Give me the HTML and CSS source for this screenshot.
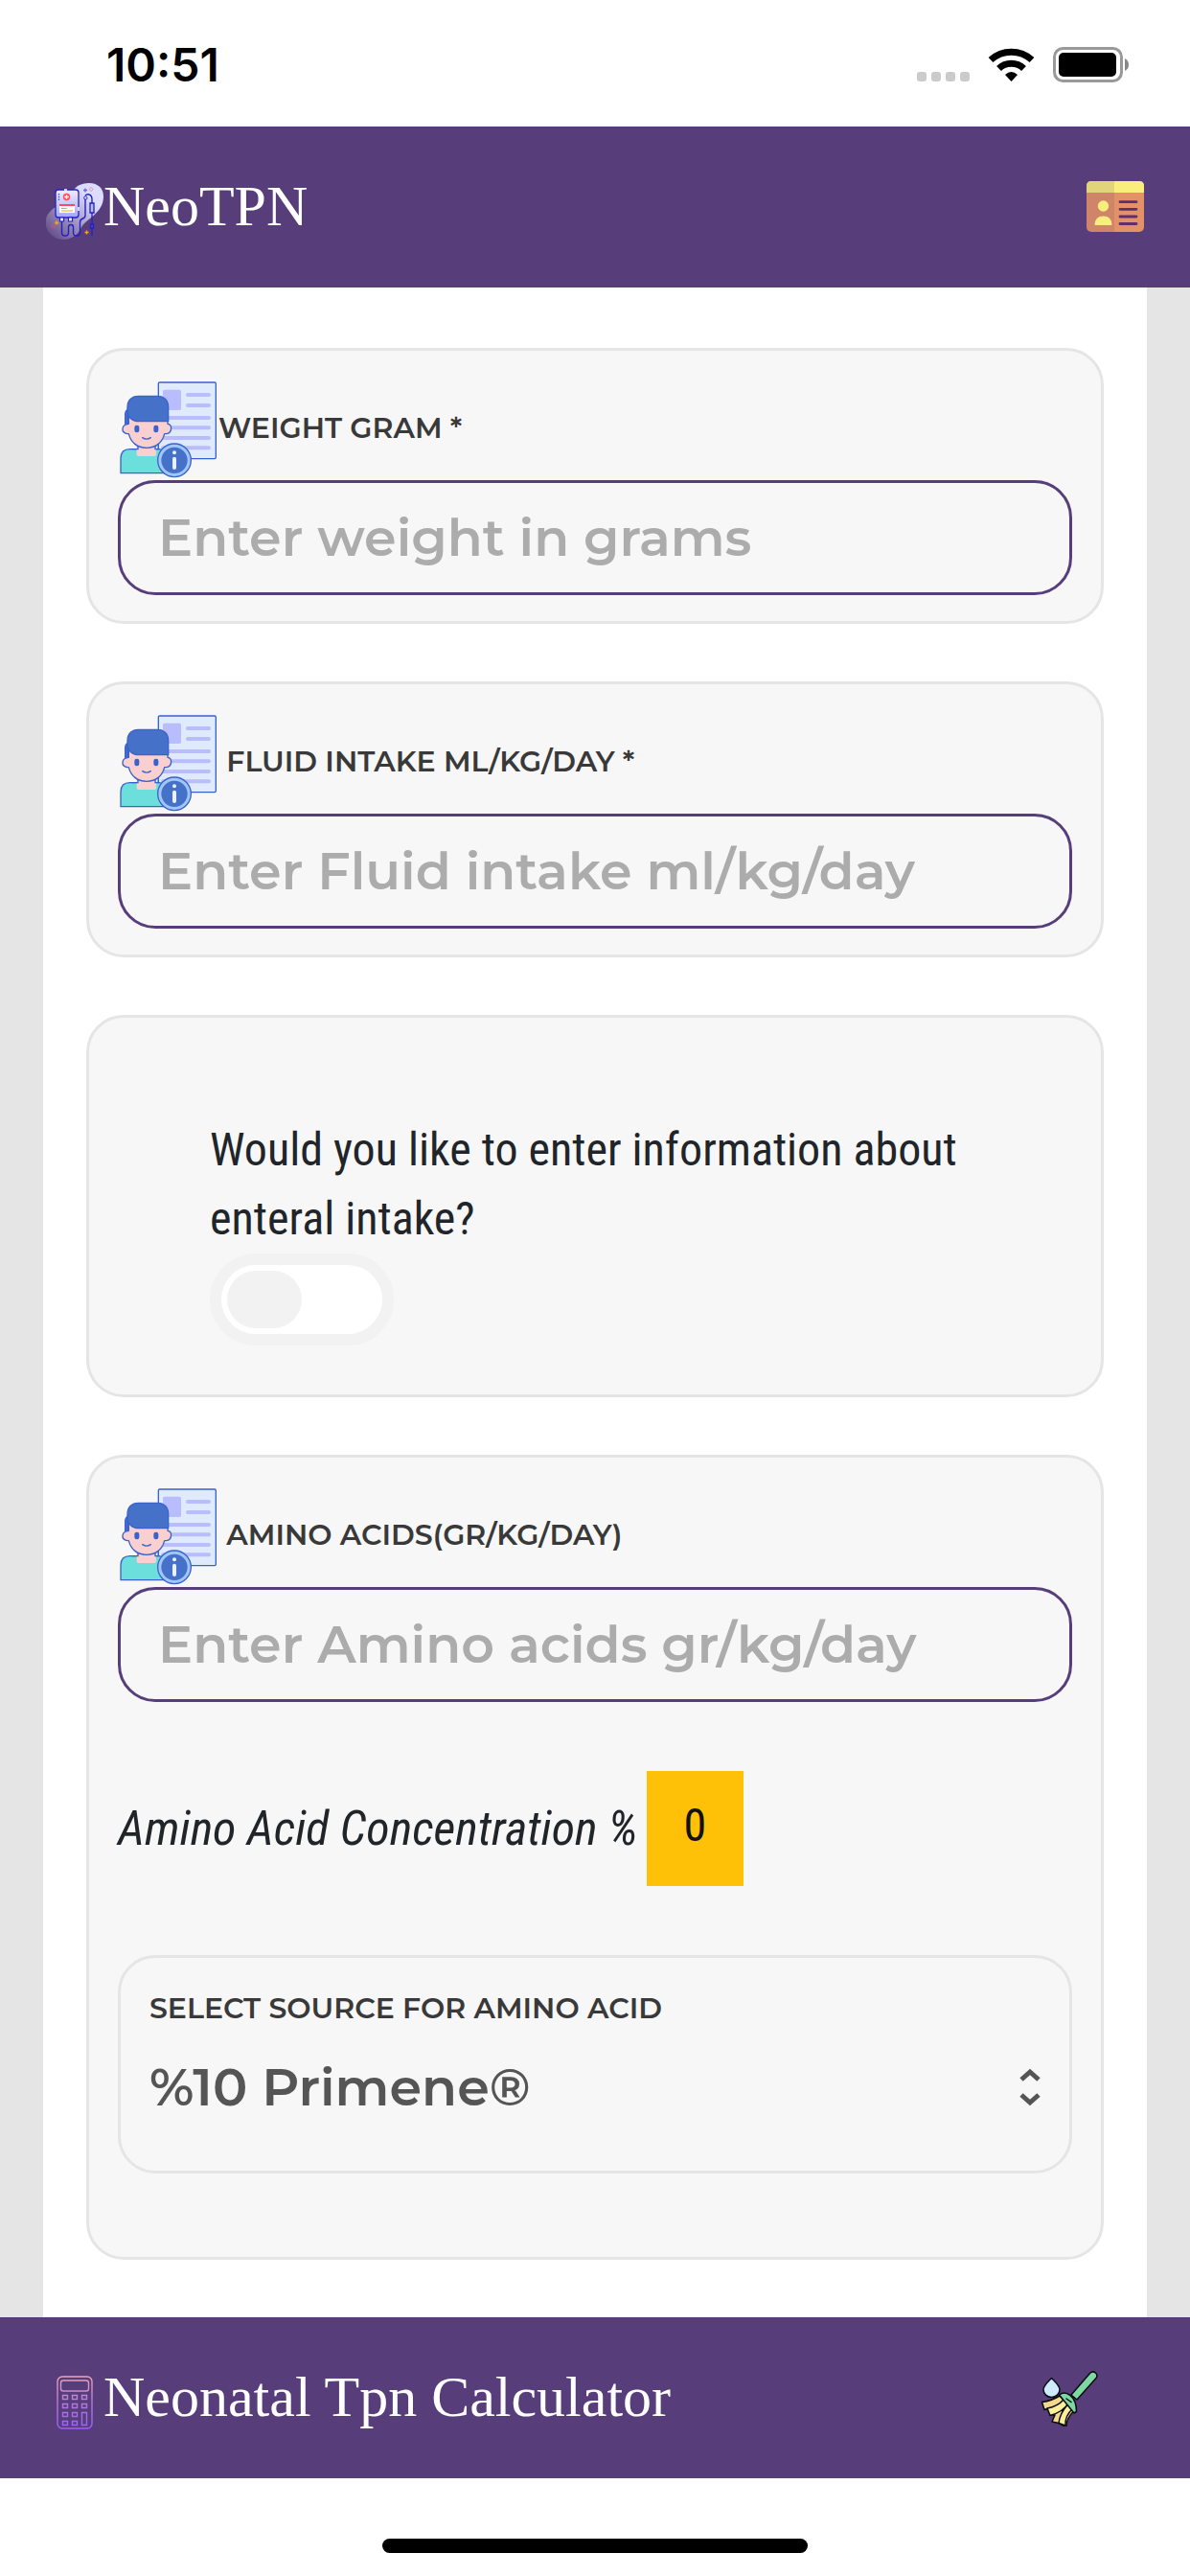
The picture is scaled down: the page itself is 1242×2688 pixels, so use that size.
FILE: index.html
```html
<!DOCTYPE html>
<html lang="en">
<head>
  <meta charset="UTF-8">
  <meta name="viewport" content="width=device-width, initial-scale=1">
  <title>NeoTPN</title>
  <link rel="stylesheet" href="styles.css">
</head>
<body>

<!-- shared form icon -->
<svg class="sprite" width="0" height="0" aria-hidden="true">
  <symbol id="patient" viewBox="39 33 315 315">
    <rect x="166" y="42" width="180" height="239" rx="4" fill="#dfeafc" stroke="#3a62cc" stroke-width="4"/>
    <rect x="180" y="65" width="57" height="64" rx="5" fill="#b9bdfd"/>
    <path d="M258 81h66M258 114h66M190 153h134M190 184h134M180 216h144M180 247h144" stroke="#b9bdfd" stroke-width="12" stroke-linecap="round"/>
    <path d="M166 235v20M157 240v12" stroke="#3a62cc" stroke-width="4"/>
    <path d="M48 326v-46c0-19 11-29 29-29h90c17 0 23 10 23 29v46z" fill="#6cdfdd" stroke="#3a62cc" stroke-width="4"/>
    <path d="M98 236h61v32q0 5-5 5h-51q-5 0-5-5z" fill="#facfd0"/>
    <path d="M102 241v10h-20M156 241v10h14" fill="none" stroke="#3a62cc" stroke-width="4"/>
    <path d="M62 172v-30q0-10 8-15v50z" fill="#4671c8" stroke="#3a62cc" stroke-width="4"/>
    <path d="M73 150h122v22c15 2 15 28-4 31h-6c-6 25-25 44-56 44s-50-19-56-44h-5c-20-4-19-29 5-31z" fill="#facfd0" stroke="#3a62cc" stroke-width="4" stroke-linejoin="round"/>
    <path d="M69 128v-8c0-21 13-35 34-35h60c21 0 34 14 34 35v44h-92c-22 0-36-14-36-36z" fill="#4671c8" stroke="#3a62cc" stroke-width="4"/>
    <rect x="91" y="176" width="15" height="23" rx="7" fill="#3a62cc"/>
    <rect x="151" y="176" width="15" height="23" rx="7" fill="#3a62cc"/>
    <path d="M116 215q13 9 26 0" fill="none" stroke="#3a62cc" stroke-width="4" stroke-linecap="round"/>
    <circle cx="216" cy="286" r="52" fill="#a1c7fa" stroke="#3a62cc" stroke-width="4"/>
    <circle cx="216" cy="286" r="41" fill="#4671c8"/>
    <circle cx="216" cy="262" r="6" fill="#e8f1fd"/>
    <path d="M216 281v28" stroke="#e8f1fd" stroke-width="12" stroke-linecap="round"/>
  </symbol>
</svg>

<div class="status">
  <span class="time">10:51</span>
  <svg width="222" height="38" viewBox="0 0 222 38" aria-hidden="true">
    <g fill="#cbcbcb">
      <rect x="0" y="26" width="10" height="10" rx="3"/>
      <rect x="15" y="26" width="10" height="10" rx="3"/>
      <rect x="30" y="26" width="10" height="10" rx="3"/>
      <rect x="45" y="26" width="10" height="10" rx="3"/>
    </g>
    <g fill="none" stroke="#000" stroke-width="7">
      <path d="M77 13.500a32 32 0 0 1 43 0"/>
      <path d="M85.500 22.500a19 19 0 0 1 26 0"/>
    </g>
    <path d="M92 29q6.500-6 13 0l-6.500 7z"/>
    <rect x="143.500" y="1.500" width="70" height="34" rx="9" fill="none" stroke="#999" stroke-width="3"/>
    <rect x="148" y="6" width="60" height="25" rx="5"/>
    <path d="M217 12q4 2 4 6.500t-4 6.500z" fill="#888"/>
  </svg>
</div>

<header class="bar">
  <div class="brand">
    <svg class="icon" viewBox="4 4 60 60" aria-hidden="true">
      <defs>
        <linearGradient id="blob" x1="1" y1="0" x2="0" y2="1">
          <stop offset="0.25" stop-color="#dcdcff"/>
          <stop offset="1" stop-color="#dcdcff" stop-opacity="0"/>
        </linearGradient>
        <linearGradient id="bag" x1="0" y1="0" x2="0" y2="1">
          <stop offset="0" stop-color="#eef"/>
          <stop offset="1" stop-color="#a3a5f8"/>
        </linearGradient>
      </defs>
      <path d="M37 7c12-6 27-3 27 11 0 18-19 23-24 34-7 14-28 15-35 0-4-12 2-18 9-23z" fill="url(#blob)"/>
      <rect x="14" y="11" width="24" height="29" rx="3" fill="url(#bag)" stroke="#2320c4" stroke-width="1.300"/>
      <path d="M23 11h3M38 29v4" stroke="#fff" stroke-width="1.500"/>
      <path d="M17.500 15v8" stroke="#4a48d8" stroke-width="1.300" stroke-dasharray="1.500 1.200"/>
      <circle cx="25.500" cy="18.500" r="3.700" fill="#ff4b55"/>
      <path d="M25.500 16.200v4.600M23.200 18.500h4.600" stroke="#fff" stroke-width="1.400"/>
      <path d="M18 28h16v7h-16z" fill="#fff"/>
      <path d="M18 26h16v2h-16z" fill="#ff4b55"/>
      <path d="M20 30.500h6M20 33h12" stroke="#ff9f1c" stroke-width="1.100"/>
      <path d="M18.500 40h4v4h-4zM27.500 40h4v4h-4z" fill="#e8e8ff" stroke="#2320c4" stroke-width="1.100"/>
      <path d="M20.500 44v12q0 3 3.500 3t3.500-3v-6q0-2.500 2.500-2.500t2.500 2.500v6q0 3 3.500 3t3.500-3v-11q0-3 3-4t2.500-5V20M45 17q2-2 4-1 3 1 3 5v4" fill="none" stroke="#2320c4" stroke-width="1.400"/>
      <circle cx="45.300" cy="19.500" r="1.700" fill="#dcdcff" stroke="#2320c4"/>
      <path d="M50 25h4v10h-4zM52 35v24M50.500 47h3v4h-3z" fill="#b9baff" stroke="#2320c4" stroke-width="1.300"/>
      <path d="M45 9.500v4M43 11.500h4" stroke="#6866ea" stroke-width="1.300"/>
      <path d="M15 43.500v4M13 45.500h4M46.500 53.500v4M44.500 55.500h4" stroke="#ff9f1c" stroke-width="1.400"/>
      <circle cx="51" cy="10.500" r="1.700" fill="none" stroke="#ee7790" stroke-dasharray="1 .5"/>
      <circle cx="11.500" cy="49.500" r="1.700" fill="none" stroke="#ee5570" stroke-dasharray="1 .5"/>
    </svg>NeoTPN
  </div>
  <button class="icon-button" type="button" aria-label="Contact">
    <svg class="icon" viewBox="0 0 60 60" aria-hidden="true">
      <rect x="0" y="3" width="60" height="53" rx="5" fill="#e39166"/>
      <path d="M0 15V8q0-5 5-5h50q5 0 5 5v7z" fill="#f9ed7c"/>
      <path d="M5 3h24v53H5q-5 0-5-5V8q0-5 5-5z" fill="#573e7b" opacity=".14"/>
      <circle cx="17.500" cy="29" r="5.700" fill="#f9ed7c"/>
      <path d="M8.500 49q0-9.500 9-9.500t9 9.500z" fill="#f9ed7c"/>
      <path d="M35 24.700h17M35 32.300h17M35 40h17M35 47.500h17" stroke="#5e2f70" stroke-width="2.800" stroke-linecap="round"/>
    </svg>
  </button>
</header>

<main class="page">
  <form class="cards" id="tpn">
    <section class="card">
      <label class="caption" for="weight"><svg class="patient" aria-hidden="true"><use href="#patient"/></svg>Weight gram *</label>
      <input class="field" id="weight" type="text" inputmode="decimal" placeholder="Enter weight in grams">
    </section>

    <section class="card">
      <label class="caption" for="fluid"><svg class="patient" aria-hidden="true"><use href="#patient"/></svg> Fluid intake ml/kg/day *</label>
      <input class="field" id="fluid" type="text" inputmode="decimal" placeholder="Enter Fluid intake ml/kg/day">
    </section>

    <section class="card card-question">
      <label for="enteral">Would you like to enter information about enteral intake?</label>
      <input class="toggle" id="enteral" type="checkbox">
    </section>

    <section class="card card-amino">
      <label class="caption" for="amino"><svg class="patient" aria-hidden="true"><use href="#patient"/></svg> Amino acids(gr/kg/day)</label>
      <input class="field" id="amino" type="text" inputmode="decimal" placeholder="Enter Amino acids gr/kg/day">
      <div class="result">
        <em>Amino Acid Concentration %</em>
        <output class="value" for="amino source">0</output>
      </div>
      <div class="select-box">
        <label class="caption" for="source">Select source for amino acid</label>
        <select class="source" id="source">
          <option>%10 Primene®</option>
        </select>
      </div>
    </section>
  </form>
</main>

<footer class="bar bar-bottom">
  <div class="brand">
    <svg class="icon" viewBox="0 0 60 60" aria-hidden="true">
      <defs>
        <linearGradient id="calc" gradientUnits="userSpaceOnUse" x1="0" y1="2" x2="0" y2="58">
          <stop offset="0" stop-color="#eca6b4"/>
          <stop offset="0.500" stop-color="#b778dd"/>
          <stop offset="1" stop-color="#9d5cff"/>
        </linearGradient>
      </defs>
      <g fill="none" stroke="url(#calc)" stroke-width="1.400">
        <rect x="12" y="3" width="36" height="54" rx="5"/>
        <rect x="15.500" y="7" width="29" height="11" rx="2.500"/>
        <path d="M17.500 22.500h5v4h-5zM27.500 22.500h5v4h-5zM37.500 22.500h5v4h-5zM17.500 31.500h5v4h-5zM27.500 31.500h5v4h-5zM37.500 31.500h5v4h-5zM17.500 40.500h5v4h-5zM27.500 40.500h5v4h-5zM37.500 40.500h5v13h-5zM17.500 49.500h5v4h-5zM27.500 49.500h5v4h-5z"/>
      </g>
    </svg>Neonatal Tpn Calculator
  </div>
  <button class="icon-button" type="reset" form="tpn" aria-label="Clear">
    <svg class="icon" viewBox="6 6 60 60" aria-hidden="true">
      <g stroke="#0b0b12" stroke-width="1.500" stroke-linejoin="round" stroke-linecap="round">
        <path d="M38 33 57.500 10.500c4-4 9.500 1 6.500 5L44 38z" fill="#7ed9a0"/>
        <path d="M26 34q-8 5-18.500 6.500l2.500 8q4-1 5-1.500l1 7q6 0 5 0l-3 7 7 1.500 7 4 1-1q0-8 8-16z" fill="#f4d98b"/>
        <path d="M30 38q-6 7-17 9l3 7.500q14-4 19-13zM40 47q-9 8-8 18l-7-2.500q1-10 9-19z" fill="#fbf09a"/>
        <path d="M25.500 33c6-5 18 0 18 17.500l-2.500 1.500z" fill="#7ed9a0"/>
        <path d="m33 37 5 3.500"/>
        <path d="M17.500 15.500c5 5 8.500 8 8.500 12a8.500 8 0 0 1-17 0c0-4 3.500-7 8.500-12z" fill="#cfeafd"/>
      </g>
    </svg>
  </button>
</footer>

<div class="home"></div>

</body>
</html>
```
FILE: styles.css
```css
* { box-sizing: border-box; }
body { margin: 0; min-height: 100vh; display: flex; flex-direction: column; background: #fff; color: #212529; font: 48px/72px "Roboto Condensed", Roboto, sans-serif; }
input, select, button { font: inherit; color: inherit; }
.sprite { position: absolute; }

.status { display: flex; align-items: center; justify-content: space-between; height: 132px; padding: 4px 63px 0 111px; color: #000; }
.time { font: 600 48px/60px Inter, sans-serif; }

.bar { display: flex; align-items: center; justify-content: space-between; height: 168px; padding: 0 48px; background: #573e7b; color: #fff; font: 60px/69px "Liberation Serif", serif; }
.bar-bottom { padding-right: 96px; }
.icon { width: 60px; height: 60px; vertical-align: middle; }
.icon-button { display: block; padding: 0; border: 0; background: none; }
.icon-button .icon { display: block; }

.page { flex: 1; padding: 0 45px; background: #e5e5e5; }
.cards { display: flex; flex-direction: column; gap: 60px; min-height: 100%; padding: 63px 45px 60px; background: #fff; }
.card { padding: 30px 30px 27px; background: #f7f7f7; border: 3px solid #e5e5e5; border-radius: 39px; }
.card-question { padding: 102px 126px 51px; }
.card-amino { padding-bottom: 87px; }

.caption { display: block; font: 600 30px/45px Montserrat, Inter, sans-serif; color: #393939; text-transform: uppercase; }
.patient { width: 105px; height: 105px; vertical-align: middle; }
.field { display: block; width: 100%; height: 120px; padding: 0 39px; border: 3px solid #573e7b; border-radius: 39px; background: transparent; font: 600 54px/72px Montserrat, Inter, sans-serif; color: #555; }
.field::placeholder { color: #acacac; opacity: 1; }

.toggle { display: block; appearance: none; width: 192px; height: 96px; margin: 0; padding: 6px; border: 12px solid #f2f2f2; border-radius: 48px; background: #fff; }
.toggle::before { content: ""; display: block; width: 78px; height: 60px; border-radius: 30px; background: #f2f2f2; }
.toggle:checked::before { margin-left: auto; background: #573e7b; }

.result { display: flex; align-items: center; gap: 9px; margin: 72px 0; }
.result em { font-size: 50px; }
.value { padding: 21px 39px 27px; background: #ffc107; color: #111; }

.select-box { padding: 30px 30px 51px; border: 3px solid #e5e5e5; border-radius: 39px; }
.source { display: block; width: 100%; margin-top: 24px; padding: 0; border: 0; appearance: none; font: 600 54px/72px Montserrat, Inter, sans-serif; color: #555; background: url("data:image/svg+xml,%3Csvg xmlns='http://www.w3.org/2000/svg' width='22' height='40' fill='none' stroke='%23555' stroke-width='5'%3E%3Cpath d='M2 12l9-8 9 8M2 28l9 8 9-8'/%3E%3C/svg%3E") no-repeat right center; }

.home { width: 444px; height: 15px; margin: 63px auto 24px; border-radius: 8px; background: #000; }
```
